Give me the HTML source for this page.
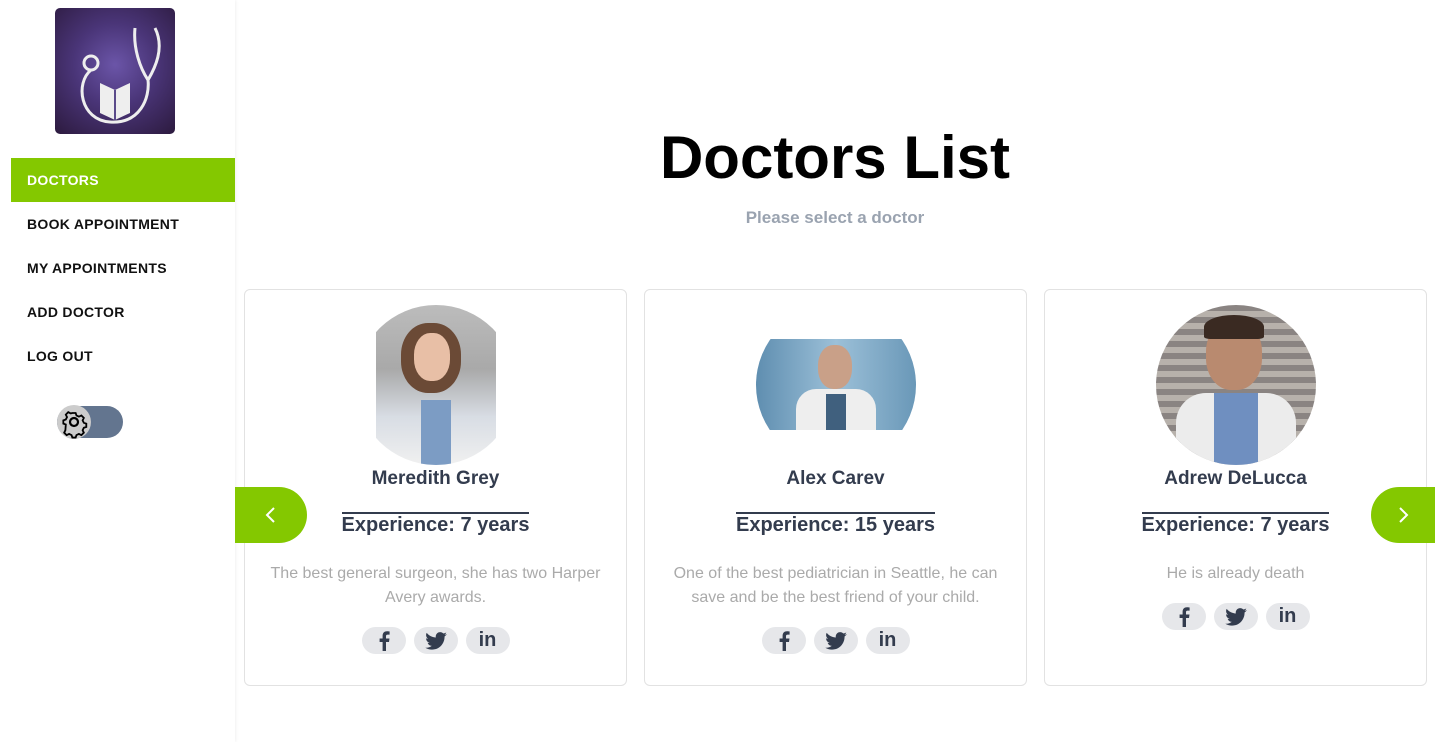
<!DOCTYPE html>
<html><head><meta charset="utf-8"><style>
*{box-sizing:border-box;margin:0;padding:0}
body{width:1435px;height:742px;overflow:hidden;background:#fff;font-family:"Liberation Sans",Arial,sans-serif;position:relative}
.side{position:absolute;left:0;top:0;width:235px;height:742px;background:#fff;box-shadow:1px 0 3px rgba(0,0,0,.06)}
.logo{position:absolute;left:55px;top:8px;width:120px;height:126px;border-radius:5px;background:radial-gradient(circle at 50% 45%,#6b55a8 0%,#4a3578 45%,#2c1a3e 100%)}
.nav{position:absolute;left:11px;width:224px;height:44px;line-height:44px;padding-left:16px;font-weight:bold;font-size:14px;color:#111;letter-spacing:.3px}
.nav.act{background:#84c800;color:#fff}
.tog{position:absolute;left:57px;top:406px;width:66px;height:32px;border-radius:16px;background:#63758f}
.knob{position:absolute;left:0;top:-1px;width:34px;height:34px;border-radius:50%;background:#ccc}
h1{position:absolute;left:235px;width:1200px;top:123px;text-align:center;font-size:60px;font-weight:bold;color:#000}
.sub{position:absolute;left:235px;width:1200px;top:208px;text-align:center;font-size:17px;font-weight:bold;color:#9aa3b0}
.card{position:absolute;top:289px;width:383px;height:397px;border:1px solid #e2e2e2;border-radius:6px;background:#fff;text-align:center}
.ph{position:absolute;left:111px;top:15px;width:160px;height:160px;border-radius:50%;overflow:hidden}
.nm{position:absolute;left:0;right:0;top:178px;font-size:19px;font-weight:bold;color:#333c4e}
.ex{position:absolute;left:0;right:0;top:222px;font-size:20px;font-weight:bold;color:#333c4e}
.ex span{display:inline-block;border-top:2px solid #333c4e;padding-top:0}
.ds{position:absolute;left:20px;right:20px;top:272px;font-size:16px;line-height:24px;color:#aaa}
.so{position:absolute;left:0;right:0;display:flex;justify-content:center;gap:8px}
.so div{width:44px;height:27px;border-radius:14px;background:#e6e7ea;display:flex;align-items:center;justify-content:center;color:#333c4e;font-weight:bold;font-size:20px}
.arr{position:absolute;top:487px;height:56px;background:#84c800;color:#fff;display:flex;align-items:center;justify-content:center}
</style></head><body>
<div class="side">
<div class="logo"><svg width="120" height="126" viewBox="0 0 120 126"><g fill="none" stroke="#eee" stroke-width="3"><circle cx="36" cy="55" r="7"/><path d="M36 62 C20 75 25 112 55 114 C85 116 95 90 93 72 C100 60 110 40 100 20 M93 72 C85 60 78 40 80 20"/></g><path d="M45 75 L60 82 L75 75 L75 105 L60 112 L45 105Z" fill="#eee"/><path d="M60 82 V112" stroke="#5a4a8a" stroke-width="2"/></svg></div>
<div class="nav act" style="top:158px">DOCTORS</div>
<div class="nav" style="top:202px">BOOK APPOINTMENT</div>
<div class="nav" style="top:246px">MY APPOINTMENTS</div>
<div class="nav" style="top:290px">ADD DOCTOR</div>
<div class="nav" style="top:334px">LOG OUT</div>
<div class="tog"><div class="knob"><svg width="34" height="34" viewBox="0 0 34 34"><g fill="none" stroke="#000" stroke-width="2.2"><circle cx="17" cy="17" r="4"/><path d="M15 6h4l1 3 3 1.5 3-1.5 3 3-1.5 3 1.5 3 3 1v4l-3 1-1.5 3 1.5 3-3 3-3-1.5-3 1.5-1 3h-4l-1-3-3-1.5-3 1.5-3-3 1.5-3L7 20l-3-1v-4l3-1 1.5-3L7 8l3-3 3 1.5z" transform="translate(17 17) scale(.82) translate(-17 -17)"/></g></svg></div></div>
</div>
<h1>Doctors List</h1>
<div class="sub">Please select a doctor</div>

<div class="card" style="left:244px">
<div class="ph" style="background:#fff"><div style="position:absolute;left:20px;width:120px;height:160px;background:linear-gradient(180deg,#bcbcbc 0%,#a9a9a9 40%,#d8dde4 70%,#f0f0f0 100%)"><div style="position:absolute;left:25px;top:18px;width:60px;height:70px;border-radius:45%;background:#6b4a36"></div><div style="position:absolute;left:38px;top:28px;width:36px;height:48px;border-radius:45%;background:#e8bfa6"></div><div style="position:absolute;left:45px;top:95px;width:30px;height:65px;background:#7c9cc4"></div></div></div>
<div class="nm">Meredith Grey</div>
<div class="ex"><span>Experience: 7 years</span></div>
<div class="ds">The best general surgeon, she has two Harper Avery awards.</div>
<div class="so" style="top:337px"><div><svg width="12" height="20" viewBox="0 0 12 20"><path d="M8 20V11h3l.5-3.5H8V5.3C8 4.3 8.3 3.6 9.8 3.6H11.6V.5C11.3.4 10.2.3 9 .3 6.4.3 4.6 1.9 4.6 4.8v2.7H1.6V11h3v9z" fill="#333c4e"/></svg></div><div><svg width="22" height="18" viewBox="0 0 24 20"><path d="M24 2.4c-.9.4-1.8.7-2.8.8 1-.6 1.8-1.6 2.2-2.7-1 .6-2 1-3.1 1.2C19.3.7 18 .1 16.6.1c-2.7 0-4.9 2.2-4.9 4.9 0 .4 0 .8.1 1.1C7.7 5.9 4.1 4 1.7 1 1.2 1.7 1 2.6 1 3.5c0 1.7.9 3.2 2.2 4.1-.8 0-1.6-.2-2.2-.6v.1c0 2.4 1.7 4.4 3.9 4.8-.4.1-.8.2-1.3.2-.3 0-.6 0-.9-.1.6 2 2.4 3.4 4.6 3.4-1.7 1.3-3.8 2.1-6.1 2.1-.4 0-.8 0-1.2-.1 2.2 1.4 4.8 2.2 7.5 2.2 9.1 0 14-7.5 14-14v-.6c1-.7 1.8-1.6 2.5-2.5z" fill="#333c4e"/></svg></div><div>in</div></div>
</div>

<div class="card" style="left:644px">
<div class="ph"><div style="position:absolute;left:0;top:34px;width:160px;height:91px;background:linear-gradient(90deg,#5f8eb0,#9cc0d8 50%,#6a98b8)"><div style="position:absolute;left:62px;top:6px;width:34px;height:44px;border-radius:45%;background:#c9a088"></div><div style="position:absolute;left:40px;top:50px;width:80px;height:41px;background:#eee;border-radius:20px 20px 0 0"></div><div style="position:absolute;left:70px;top:55px;width:20px;height:36px;background:#40607e"></div></div></div>
<div class="nm">Alex Carev</div>
<div class="ex"><span>Experience: 15 years</span></div>
<div class="ds">One of the best pediatrician in Seattle, he can save and be the best friend of your child.</div>
<div class="so" style="top:337px"><div><svg width="12" height="20" viewBox="0 0 12 20"><path d="M8 20V11h3l.5-3.5H8V5.3C8 4.3 8.3 3.6 9.8 3.6H11.6V.5C11.3.4 10.2.3 9 .3 6.4.3 4.6 1.9 4.6 4.8v2.7H1.6V11h3v9z" fill="#333c4e"/></svg></div><div><svg width="22" height="18" viewBox="0 0 24 20"><path d="M24 2.4c-.9.4-1.8.7-2.8.8 1-.6 1.8-1.6 2.2-2.7-1 .6-2 1-3.1 1.2C19.3.7 18 .1 16.6.1c-2.7 0-4.9 2.200-4.9 4.900 0 .4 0 .8.1 1.1C7.7 5.9 4.1 4 1.7 1 1.2 1.7 1 2.6 1 3.5c0 1.7.9 3.2 2.2 4.1-.8 0-1.6-.2-2.2-.6v.1c0 2.4 1.7 4.4 3.900 4.800-.4.1-.8.2-1.300.2-.3 0-.6 0-.9-.1.6 2 2.4 3.4 4.600 3.400-1.700 1.300-3.800 2.100-6.100 2.100-.4 0-.8 0-1.200-.1 2.200 1.400 4.800 2.200 7.500 2.200 9.100 0 14-7.500 14-14v-.6c1-.7 1.800-1.600 2.500-2.500z" fill="#333c4e"/></svg></div><div>in</div></div>
</div>

<div class="card" style="left:1044px">
<div class="ph" style="background:repeating-linear-gradient(180deg,#8a8482 0 6px,#b7b1ab 6px 12px)"><div style="position:absolute;left:50px;top:15px;width:56px;height:70px;border-radius:45%;background:#b98a6f"></div><div style="position:absolute;left:48px;top:10px;width:60px;height:24px;border-radius:50% 50% 10% 10%;background:#3a2a22"></div><div style="position:absolute;left:20px;top:88px;width:120px;height:72px;background:#ececec;border-radius:30px 30px 0 0"></div><div style="position:absolute;left:58px;top:88px;width:44px;height:72px;background:#6f8fc0"></div></div>
<div class="nm">Adrew DeLucca</div>
<div class="ex"><span>Experience: 7 years</span></div>
<div class="ds">He is already death</div>
<div class="so" style="top:313px"><div><svg width="12" height="20" viewBox="0 0 12 20"><path d="M8 20V11h3l.5-3.5H8V5.3C8 4.3 8.3 3.6 9.8 3.6H11.6V.5C11.3.4 10.2.3 9 .3 6.4.3 4.6 1.9 4.6 4.8v2.7H1.6V11h3v9z" fill="#333c4e"/></svg></div><div><svg width="22" height="18" viewBox="0 0 24 20"><path d="M24 2.4c-.9.4-1.8.7-2.8.8 1-.6 1.8-1.6 2.2-2.7-1 .6-2 1-3.1 1.2C19.3.7 18 .1 16.6.1c-2.7 0-4.9 2.2-4.9 4.9 0 .4 0 .8.1 1.1C7.7 5.9 4.1 4 1.7 1 1.2 1.7 1 2.6 1 3.5c0 1.7.9 3.2 2.2 4.1-.8 0-1.6-.2-2.2-.6v.1c0 2.4 1.7 4.4 3.9 4.8-.4.1-.8.2-1.3.2-.3 0-.6 0-.9-.1.6 2 2.4 3.4 4.6 3.4-1.7 1.3-3.8 2.1-6.1 2.1-.4 0-.8 0-1.2-.1 2.2 1.4 4.8 2.2 7.5 2.2 9.1 0 14-7.5 14-14v-.6c1-.7 1.8-1.6 2.5-2.5z" fill="#333c4e"/></svg></div><div>in</div></div>
</div>

<div class="arr" style="left:235px;width:72px;border-radius:0 28px 28px 0"><svg width="14" height="18" viewBox="0 0 14 18"><path d="M10 2 L3 9 L10 16" fill="none" stroke="#fff" stroke-width="2"/></svg></div>
<div class="arr" style="left:1371px;width:64px;border-radius:28px 0 0 28px"><svg width="14" height="18" viewBox="0 0 14 18"><path d="M4 2 L11 9 L4 16" fill="none" stroke="#fff" stroke-width="2"/></svg></div>
</body></html>
